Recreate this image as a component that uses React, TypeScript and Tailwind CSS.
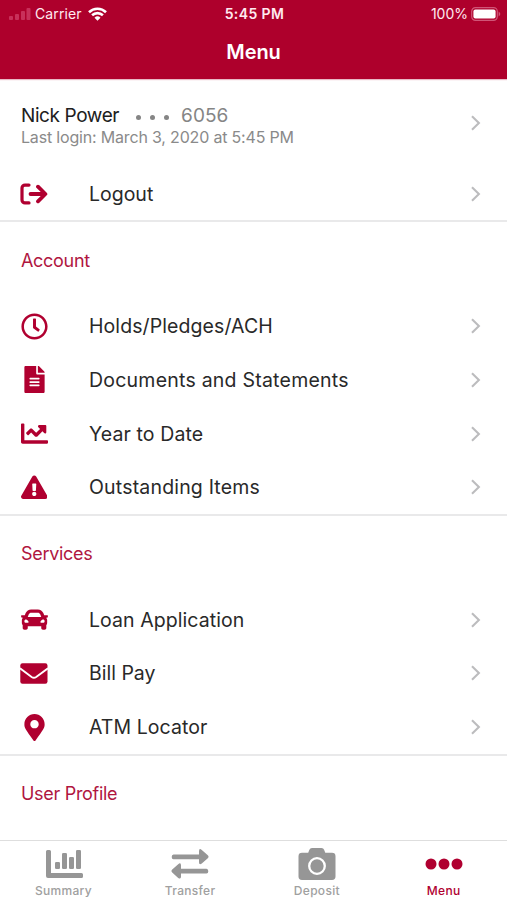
import React from "react";
import { FaRegClock, FaFileAlt, FaChartLine, FaExclamationTriangle, FaCar, FaMapMarkerAlt } from "react-icons/fa";

const Chevron = () => (
  <svg className="ml-auto mr-[26px] h-4 w-[11px] shrink-0" viewBox="0 0 11 16" fill="none" stroke="#bcbcbe" strokeWidth="2.1">
    <path d="M2 1.2 8.900 8 2 14.800" />
  </svg>
);

const LogoutIcon = () => (
  <svg width="28" height="22" viewBox="0 0 28 22" fill="none" stroke="currentColor" strokeWidth="3.2" strokeLinecap="round" strokeLinejoin="round">
    <path d="M9 2.100H5a3 3 0 0 0-3 3v11.800a3 3 0 0 0 3 3h4" />
    <path d="M10.500 11H24" strokeWidth="3.800" />
    <path d="M18 3.700 25.400 11 18 18.300" strokeWidth="3.800" />
  </svg>
);

const EnvelopeIcon = () => (
  <svg width="28" height="21" viewBox="0 0 28 21">
    <rect x=".3" y=".3" width="27.200" height="20.400" rx="2.200" fill="currentColor" />
    <path d="M0 5.200 11.600 14q2.300 1.500 4.600 0L28 5.200" fill="none" stroke="#fff" strokeWidth="1.900" />
  </svg>
);

function Row({ icon, label, tracking = "", height = "h-[53.8px]" }: { icon: React.ReactNode; label: string; tracking?: string; height?: string }) {
  return (
    <div className={`flex items-center ${height}`}>
      <div className="ml-5 flex w-7 shrink-0 justify-center text-[#b00030]">{icon}</div>
      <span className={`ml-[41px] whitespace-nowrap text-[19.5px] leading-6 text-[#292929] ${tracking}`}>{label}</span>
      <Chevron />
    </div>
  );
}

function Section({ title, height, children }: { title: string; height: string; children?: React.ReactNode }) {
  return (
    <section className="border-t-2 border-[#e9e9ea]">
      <h2 className={`flex items-center px-[21px] text-[18px] font-normal tracking-[-0.3px] text-[#b0163f] ${height}`}>{title}</h2>
      {children}
    </section>
  );
}

function Tab({ icon, label, active = false }: { icon: React.ReactNode; label: string; active?: boolean }) {
  return (
    <div className={`flex flex-1 flex-col items-center pt-[5px] ${active ? "text-[#b00030]" : "text-[#969696]"}`}>
      <div className="flex h-9 items-center justify-center">{icon}</div>
      <span className={`mt-px text-[12px] font-medium leading-4 tracking-[0.3px] ${active ? "" : "text-[#a0a0a0]"}`}>{label}</span>
    </div>
  );
}

export default function App() {
  return (
    <div className="flex h-[900px] w-[507px] flex-col overflow-hidden bg-white font-['Inter',sans-serif]">
      <header className="z-10 h-[79px] shrink-0 bg-[#ae002c] text-white shadow-[0_1px_1px_#e8b9c5]">
        <div className="grid h-7 grid-cols-3 items-center pl-[9px] pr-[7px] text-[14px] leading-4 text-[#ffeaf0]">
          <div className="flex items-center">
            <svg width="22" height="14" viewBox="0 0 22 14" fill="#c8305a">
              <rect y="9" width="4" height="4" rx="1" />
              <rect x="6" y="7" width="4" height="6" rx="1" />
              <rect x="12" y="4" width="4" height="9" rx="1" />
              <rect x="17.5" y="1" width="4" height="12" rx="1" />
            </svg>
            <span className="ml-1 tracking-[0.1px]">Carrier</span>
            <svg className="-mt-px ml-[6px]" width="19" height="14" viewBox="0 0 19 14" fill="none" stroke="#fff" strokeWidth="2.6">
              <path d="M1 5.2a12.2 12.2 0 0 1 17 0M4.1 8.3a7.8 7.8 0 0 1 10.8 0" />
              <path d="M6.500 10.800a4.300 4.300 0 0 1 6 0l-3 3Z" fill="#fff" stroke="none" />
            </svg>
          </div>
          <div className="whitespace-nowrap text-center font-semibold tracking-[0.4px]">5:45 PM</div>
          <div className="-mt-px flex items-center justify-end">
            <span className="mt-px">100%</span>
            <svg className="ml-[3px] -mr-px" width="30" height="14" viewBox="0 0 30 14">
              <rect x=".7" y=".7" width="25.600" height="12.600" rx="3.700" fill="none" stroke="#d05577" strokeWidth="1.200" />
              <rect x="2.400" y="2.400" width="22.200" height="9.200" rx="2" fill="#fff" />
              <path d="M27.600 4.600q3.400 2.400 0 4.800Z" fill="#d05577" />
            </svg>
          </div>
        </div>
        <h1 className="mt-3 text-center text-[20px] font-semibold leading-6 tracking-[-0.1px]">Menu</h1>
      </header>

      <main className="min-h-0 flex-1 overflow-hidden">
        <div className="flex h-[88.3px] items-center pl-[21px]">
          <div className="pt-[5px]">
            <div className="flex h-[22px] items-center whitespace-nowrap pt-px text-[19px] text-[#202020]">
              <span className="w-[115px] tracking-[-0.4px]">Nick Power</span>
              <span className="mt-0.5 flex w-[45px] gap-[9px] text-[#858585]">
                <i className="size-[5px] rounded-full bg-current" />
                <i className="size-[5px] rounded-full bg-current" />
                <i className="size-[5px] rounded-full bg-current" />
              </span>
              <span className="tracking-[0.1px] text-[#858585]">6056</span>
            </div>
            <div className="whitespace-nowrap text-[16px] leading-5 tracking-[-0.18px] text-[#8a8a8a]">Last login: March 3, 2020 at 5:45 PM</div>
          </div>
          <Chevron />
        </div>
        <Row height="h-[52.9px] pt-px" icon={<LogoutIcon />} label="Logout" />
        <Section title="Account" height="h-[77px]">
          <Row icon={<FaRegClock size={27} />} label="Holds/Pledges/ACH" tracking="tracking-[0.09px]" />
          <Row icon={<FaFileAlt size={27} />} label="Documents and Statements" tracking="tracking-[0.23px]" />
          <Row icon={<FaChartLine size={27} />} label="Year to Date" tracking="tracking-[0.1px]" />
          <Row icon={<FaExclamationTriangle size={26.5} />} label="Outstanding Items" tracking="tracking-[0.18px]" />
        </Section>
        <Section title="Services" height="h-[76.4px] pb-[2px]">
          <Row icon={<FaCar size={27} />} label="Loan Application" tracking="tracking-[0.07px]" />
          <Row icon={<EnvelopeIcon />} label="Bill Pay" />
          <Row icon={<FaMapMarkerAlt size={27} />} label="ATM Locator" tracking="tracking-[0.06px]" />
        </Section>
        <Section title="User Profile" height="h-[76.4px] pb-[2px]" />
      </main>

      <nav className="flex h-[60px] shrink-0 border-t border-[#dedede] bg-white">
        <Tab label="Summary" icon={
          <svg className="ml-[3px]" width="37" height="28" viewBox="0 0 37 28" fill="currentColor">
            <path d="M1.500 0h2Q5 0 5 1.500V23h30.500q1.500 0 1.500 1.500v2Q37 28 35.500 28H2q-2 0-2-2V1.500Q0 0 1.500 0Z" />
            <rect x="9" y="12" width="5" height="7" rx="1.300" />
            <rect x="16" y="3" width="5" height="16" rx="1.300" />
            <rect x="23" y="7" width="5" height="12" rx="1.300" />
            <rect x="30" width="5" height="19" rx="1.300" />
          </svg>} />
        <Tab label="Transfer" icon={
          <svg width="38" height="30" viewBox="0 0 38 30" fill="currentColor">
            <path d="M2.500 5.500H28V2.300Q28-1.300 30.800.900L36.800 6.200q1.500 1.500 0 3L30.800 14.600Q28 16.500 28 13.200V10.200H2.500Q.7 10.200.7 7.900T2.500 5.500Z" />
            <path d="M35.500 19.800H10V16.600Q10 13 7.200 15.200L1.200 20.500q-1.500 1.500 0 3L7.200 28.900Q10 30.800 10 27.500V24.500H35.500Q37.300 24.500 37.300 22.200T35.500 19.800Z" />
          </svg>} />
        <Tab label="Deposit" icon={
          <svg width="38" height="32" viewBox="0 0 38 32" fill="currentColor">
            <path d="M4 4.800h6.200l1.200-3Q12 0 14 0h9.500q2 0 2.600 1.800l1.200 3H34q3.500 0 3.500 3.400v20.400Q37.500 32 34 32H4Q.5 32 .5 28.600V8.200Q.5 4.800 4 4.800Z" />
            <circle cx="19" cy="18" r="7.800" fill="none" stroke="white" strokeWidth="2.300" />
          </svg>} />
        <Tab active label="Menu" icon={
          <svg width="38" height="12" viewBox="0 0 38 12" fill="currentColor">
            <circle cx="6" cy="6" r="5.500" /><circle cx="19" cy="6" r="5.500" /><circle cx="32" cy="6" r="5.500" />
          </svg>} />
      </nav>
    </div>
  );
}
